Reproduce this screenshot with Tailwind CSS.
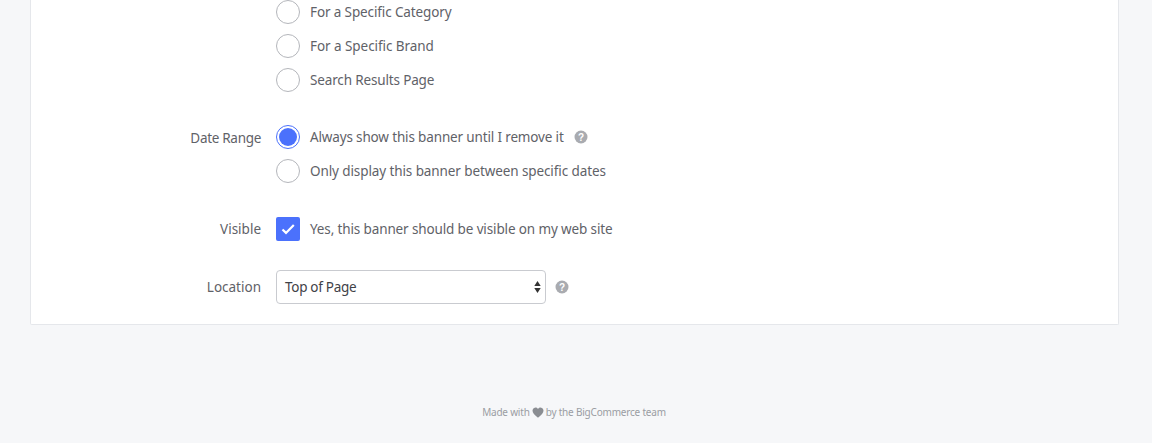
<!DOCTYPE html>
<html><head><meta charset="utf-8"><script src="https://cdn.jsdelivr.net/npm/@tailwindcss/browser@4"></script></head>
<body class="bg-[#f6f7f9] font-['Noto_Sans',sans-serif] text-[13.5px] text-[#5f6268] h-[443px] overflow-hidden">
<main class="ml-[30px] w-[1089px] h-[325px] bg-white border-x border-b border-[#e5e7eb] rounded-b-[2px] flex flex-col">
  <section class="flex">
    <div class="w-[231px]"></div>
    <div class="ml-[14px] flex flex-col gap-[10px]">
      <label class="flex items-center h-[24px] gap-[10px]"><span class="w-[24px] h-[24px] rounded-full border border-[#b4b6bb] bg-white"></span><span class="tracking-[-0.12px]">For a Specific Category</span></label>
      <label class="flex items-center h-[24px] gap-[10px]"><span class="w-[24px] h-[24px] rounded-full border border-[#b4b6bb] bg-white"></span><span class="tracking-[-0.06px]">For a Specific Brand</span></label>
      <label class="flex items-center h-[24px] gap-[10px]"><span class="w-[24px] h-[24px] rounded-full border border-[#b4b6bb] bg-white"></span><span class="tracking-[-0.15px]">Search Results Page</span></label>
    </div>
  </section>
  <section class="flex mt-[33px]">
    <div class="w-[230px] text-right h-[24px] leading-[26px] tracking-[-0.3px]">Date Range</div>
    <div class="ml-[15px] flex flex-col gap-[10px]">
      <label class="flex items-center h-[24px] gap-[10px]"><span class="w-[24px] h-[24px] rounded-full border border-[#4b71fc] bg-white flex items-center justify-center"><span class="w-[18px] h-[18px] rounded-full bg-[#4b71fc]"></span></span><span class="tracking-[-0.15px]">Always show this banner until I remove it</span>
        <svg class="w-[14px] h-[14px]" viewBox="0 0 14 14"><circle cx="7" cy="7" r="6.5" fill="#a9abb0"/><text x="7" y="10.5" text-anchor="middle" font-size="10" font-weight="700" fill="#fff" font-family="Liberation Sans">?</text></svg></label>
      <label class="flex items-center h-[24px] gap-[10px]"><span class="w-[24px] h-[24px] rounded-full border border-[#b4b6bb] bg-white"></span><span class="tracking-[-0.1px]">Only display this banner between specific dates</span></label>
    </div>
  </section>
  <section class="flex mt-[34px]">
    <div class="w-[230px] text-right h-[24px] leading-[25px]">Visible</div>
    <label class="ml-[15px] flex items-center h-[24px] gap-[10px]"><span class="w-[24px] h-[24px] rounded-[2px] bg-[#4b71fc] flex items-center justify-center"><svg class="w-[14px] h-[14px]" viewBox="0 0 14 14" fill="none"><path d="M1.500 7.500l3.500 3.400 7.800-8" stroke="#fff" stroke-width="2.200"/></svg></span><span class="tracking-[-0.13px]">Yes, this banner should be visible on my web site</span></label>
  </section>
  <section class="flex items-center mt-[29px]">
    <div class="w-[230px] text-right">Location</div>
    <div class="ml-[15px] w-[270px] h-[34px] border border-[#c9cbd0] rounded-[4px] flex items-center justify-between pl-[8px] pr-[4px] text-[#3f4248]"><span class="tracking-[-0.3px]">Top of Page</span>
      <svg class="w-[7px] h-[14px]" viewBox="0 0 7 14"><path d="M3.500 1l3.200 5h-6.400zM3.500 13l3.200-5h-6.400z" fill="#333"/></svg></div>
    <svg class="ml-[9px] w-[14px] h-[14px]" viewBox="0 0 14 14"><circle cx="7" cy="7" r="6.5" fill="#a9abb0"/><text x="7" y="10.5" text-anchor="middle" font-size="10" font-weight="700" fill="#fff" font-family="Liberation Sans">?</text></svg>
  </section>
</main>
<footer class="mt-[79px] h-[16px] flex items-center justify-center gap-[2px] text-[10px] tracking-[-0.2px] text-[#9a9da3] pr-[4px]"><span>Made with</span><svg class="w-[12px] h-[11px]" viewBox="0 0 24 22"><path d="M12 21.500C5 15.500 1 12 1 7a6 6 0 0 1 11-3.200A6 6 0 0 1 23 7c0 5-4 8.500-11 14.500z" fill="#8a8d92"/></svg><span>by the BigCommerce team</span></footer>
</body></html>
